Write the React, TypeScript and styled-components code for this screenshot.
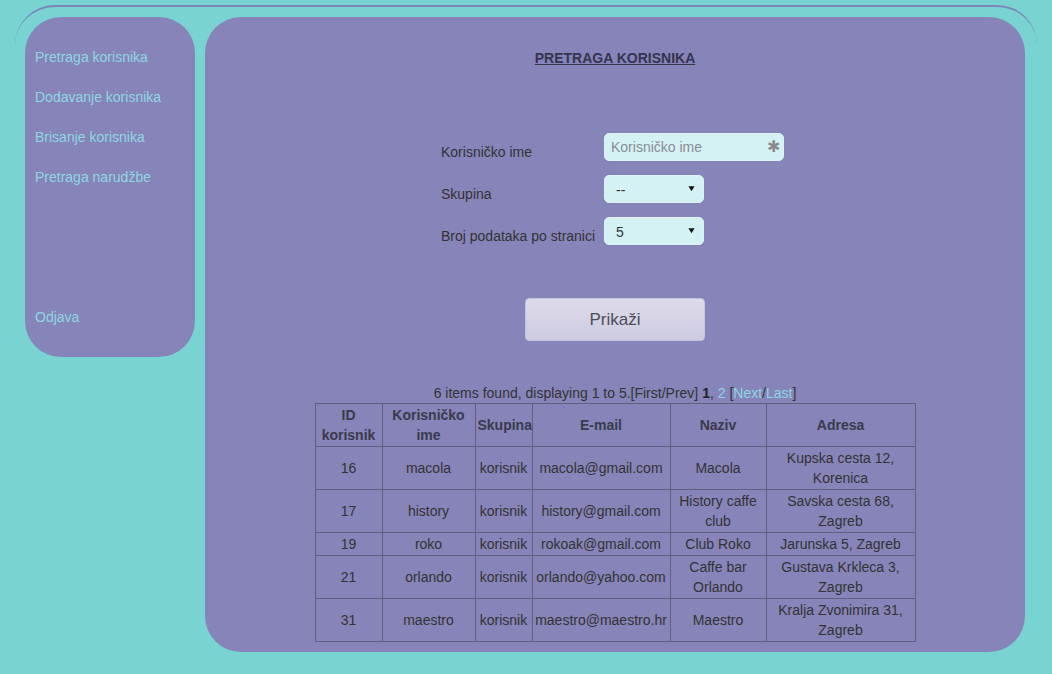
import styled, { createGlobalStyle } from 'styled-components';

const GlobalStyle = createGlobalStyle`
  html, body {
    margin: 0;
    padding: 0;
    background: #79d3d1;
    font-family: "Liberation Sans", Arial, sans-serif;
    font-size: 14px;
    color: #333;
  }
`;

interface User {
  id: number;
  username: string;
  group: string;
  email: string;
  name: string;
  address: string;
}

const users: User[] = [
  { id: 16, username: 'macola', group: 'korisnik', email: 'macola@gmail.com', name: 'Macola', address: 'Kupska cesta 12, Korenica' },
  { id: 17, username: 'history', group: 'korisnik', email: 'history@gmail.com', name: 'History caffe club', address: 'Savska cesta 68, Zagreb' },
  { id: 19, username: 'roko', group: 'korisnik', email: 'rokoak@gmail.com', name: 'Club Roko', address: 'Jarunska 5, Zagreb' },
  { id: 21, username: 'orlando', group: 'korisnik', email: 'orlando@yahoo.com', name: 'Caffe bar Orlando', address: 'Gustava Krkleca 3, Zagreb' },
  { id: 31, username: 'maestro', group: 'korisnik', email: 'maestro@maestro.hr', name: 'Maestro', address: 'Kralja Zvonimira 31, Zagreb' },
];

const menu = ['Pretraga korisnika', 'Dodavanje korisnika', 'Brisanje korisnika', 'Pretraga narudžbe'];

const App = () => {
  return (
    <>
      <GlobalStyle />
      <StyledWrapper>
        <StyledSidebar>
          {menu.map((item) => (
            <StyledNavLink key={item}>{item}</StyledNavLink>
          ))}
          <StyledNavLink $offset={100}>Odjava</StyledNavLink>
        </StyledSidebar>

        <StyledMain>
          <StyledTitle>PRETRAGA KORISNIKA</StyledTitle>

          <StyledForm>
            <StyledLabel>Korisničko ime</StyledLabel>
            <StyledInputBox>
              <StyledInput placeholder="Korisničko ime" />
              <StyledRequired>✱</StyledRequired>
            </StyledInputBox>

            <StyledLabel>Skupina</StyledLabel>
            <StyledSelect>
              <span>--</span>
              <StyledCaret viewBox="0 0 8 8">
                <path d="M0.5 1.5 L7.5 1.5 L4 7 Z" fill="#111" />
              </StyledCaret>
            </StyledSelect>

            <StyledLabel>Broj podataka po stranici</StyledLabel>
            <StyledSelect>
              <span>5</span>
              <StyledCaret viewBox="0 0 8 8">
                <path d="M0.5 1.5 L7.5 1.5 L4 7 Z" fill="#111" />
              </StyledCaret>
            </StyledSelect>
          </StyledForm>

          <StyledButton>Prikaži</StyledButton>

          <StyledPager>
            6 items found, displaying 1 to 5.[First/Prev] <b>1</b>, <StyledLink>2</StyledLink> [
            <StyledLink>Next</StyledLink>/<StyledLink>Last</StyledLink>]
          </StyledPager>

          <StyledTable>
            <colgroup>
              <col style={{ width: 67 }} />
              <col style={{ width: 93 }} />
              <col style={{ width: 57 }} />
              <col style={{ width: 138 }} />
              <col style={{ width: 96 }} />
              <col style={{ width: 149 }} />
            </colgroup>
            <thead>
              <tr>
                <th>ID korisnik</th>
                <th>Korisničko ime</th>
                <th>Skupina</th>
                <th>E-mail</th>
                <th>Naziv</th>
                <th>Adresa</th>
              </tr>
            </thead>
            <tbody>
              {users.map((u) => (
                <tr key={u.id}>
                  <td>{u.id}</td>
                  <td>{u.username}</td>
                  <td>{u.group}</td>
                  <td>{u.email}</td>
                  <td>{u.name}</td>
                  <td>{u.address}</td>
                </tr>
              ))}
            </tbody>
          </StyledTable>
        </StyledMain>
      </StyledWrapper>
    </>
  );
};

export default App;

const StyledWrapper = styled.div`
  margin: 5px 15px 0;
  border-top: 2px solid #7b86b9;
  border-radius: 40px 40px 0 0;
  padding: 10px 10px 0;
  display: flex;
  align-items: flex-start;
  gap: 10px;
`;

const StyledSidebar = styled.nav`
  width: 170px;
  box-sizing: border-box;
  background: #8684b9;
  border-radius: 36px;
  padding: 30px 10px 10px;
  display: flex;
  flex-direction: column;
`;

const StyledNavLink = styled.a<{ $offset?: number }>`
  display: block;
  height: 40px;
  line-height: 20px;
  margin-top: ${(props) => props.$offset ?? 0}px;
  color: #8cd8e2;
  font-size: 14px;
  cursor: pointer;
`;

const StyledMain = styled.main`
  width: 820px;
  height: 635px;
  box-sizing: border-box;
  background: #8684b9;
  border-radius: 36px;
  padding-top: 31px;
  display: flex;
  flex-direction: column;
  align-items: center;
  overflow: hidden;
`;

const StyledTitle = styled.h1`
  margin: 0;
  font-size: 14px;
  line-height: 20px;
  font-weight: bold;
  text-decoration: underline;
  color: #35354f;
`;

const StyledForm = styled.div`
  margin-top: 65px;
  width: 348px;
  display: grid;
  grid-template-columns: 163px 185px;
  row-gap: 14px;
`;

const StyledLabel = styled.label`
  padding-top: 10px;
  line-height: 18px;
  color: #333;
  white-space: nowrap;
`;

const StyledInputBox = styled.div`
  position: relative;
  width: 180px;
  height: 28px;
`;

const StyledInput = styled.input`
  width: 100%;
  height: 100%;
  box-sizing: border-box;
  border: 1px solid #dcf2f5;
  border-radius: 5px;
  background: #d4f2f3;
  padding: 0 24px 0 6px;
  font-family: "Liberation Sans", Arial, sans-serif;
  font-size: 14px;
  color: #333;
  outline: none;

  &::placeholder {
    color: #8c8c96;
  }
`;

const StyledRequired = styled.span`
  position: absolute;
  right: 4px;
  top: 5px;
  font-size: 16px;
  line-height: 18px;
  color: #8a8a8a;
`;

const StyledSelect = styled.div`
  width: 100px;
  height: 28px;
  box-sizing: border-box;
  border: 1px solid #dcf2f5;
  border-radius: 5px;
  background: #d4f2f3;
  padding: 2px 8px 0 11px;
  display: flex;
  align-items: center;
  justify-content: space-between;
  font-size: 14px;
  color: #333;
`;

const StyledCaret = styled.svg`
  width: 7px;
  height: 7px;
  margin-bottom: 4px;
`;

const StyledButton = styled.button`
  margin-top: 53px;
  width: 180px;
  height: 43px;
  border: 1px solid #c4c2d8;
  border-radius: 4px;
  background: linear-gradient(#dddbeb, #cdcbdf);
  font-family: "Liberation Sans", Arial, sans-serif;
  font-size: 17px;
  color: #4c4c5a;
  cursor: pointer;
`;

const StyledPager = styled.div`
  margin-top: 42px;
  line-height: 20px;
  color: #333;

  b {
    color: #222;
  }
`;

const StyledLink = styled.a`
  color: #8cd8e2;
  cursor: pointer;
`;

const StyledTable = styled.table`
  width: 600px;
  table-layout: fixed;
  border-collapse: collapse;
  color: #333;

  th,
  td {
    border: 1px solid #62607f;
    padding: 1px 2px;
    line-height: 20px;
    text-align: center;
    vertical-align: middle;
    font-size: 14px;
  }

  th {
    font-weight: bold;
    color: #3a3a4c;
  }
`;
